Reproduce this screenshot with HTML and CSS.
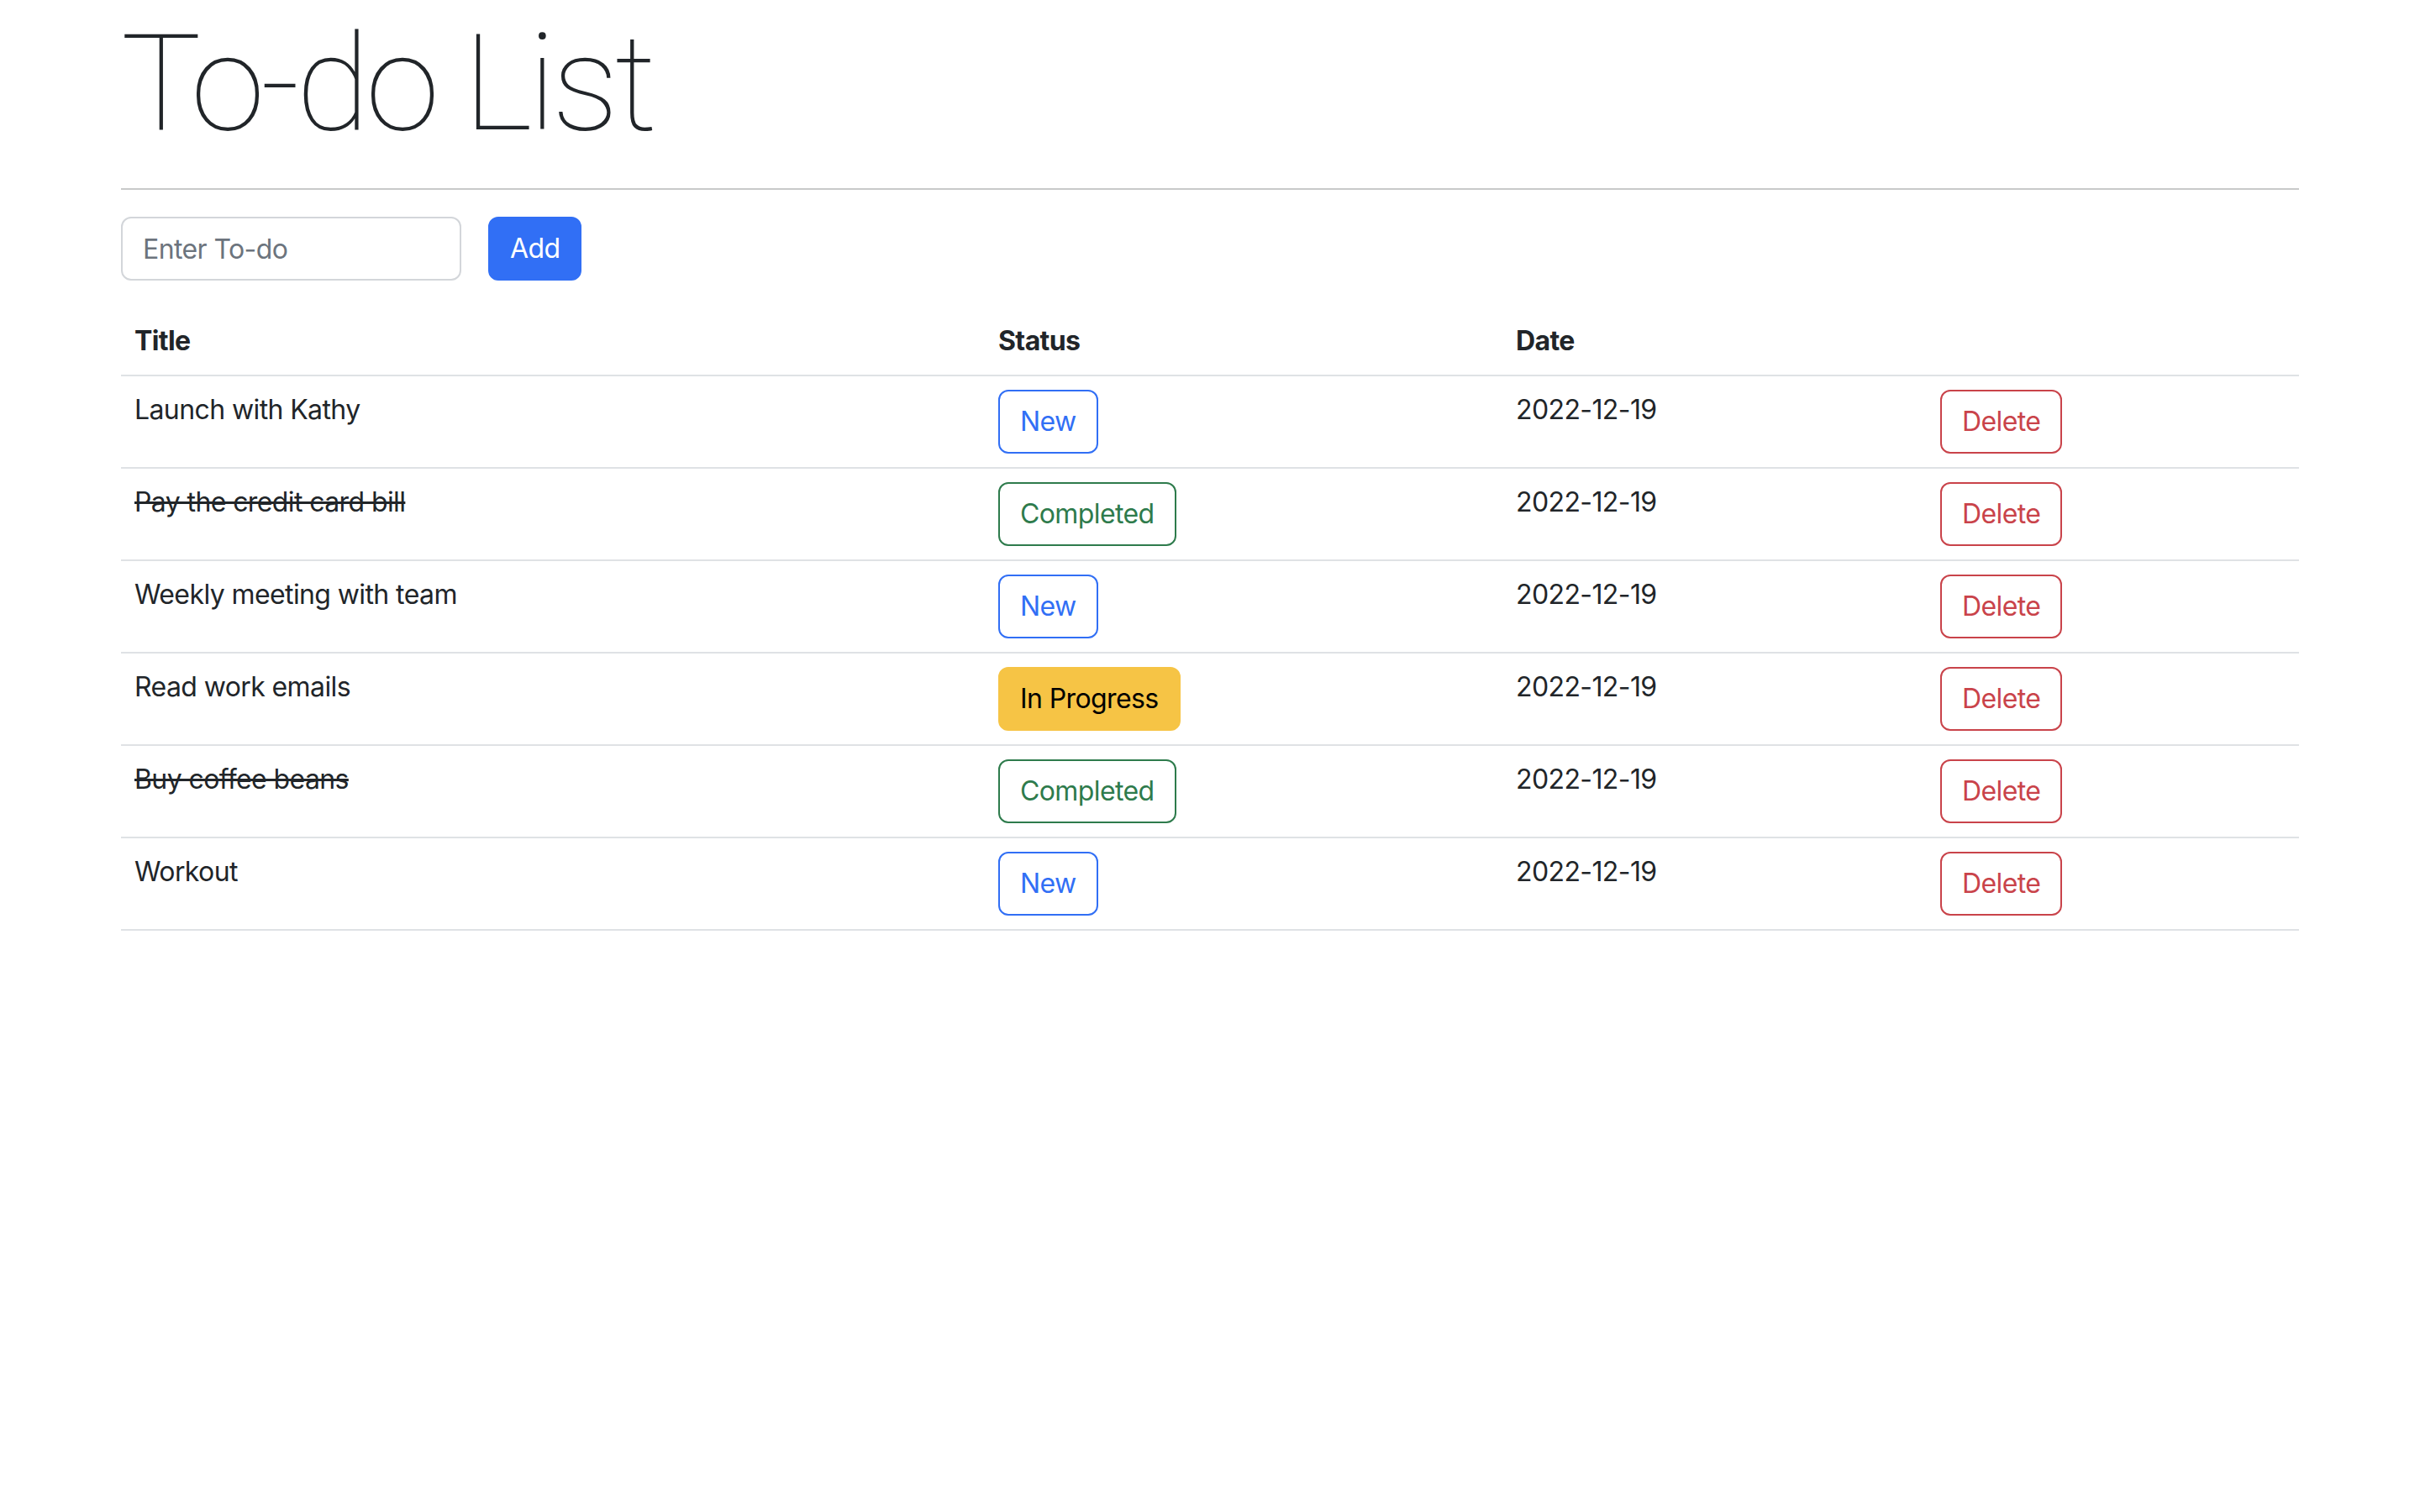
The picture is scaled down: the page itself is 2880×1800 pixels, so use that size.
FILE: index.html
```html
<!DOCTYPE html>
<html lang="en">
<head>
<meta charset="utf-8">
<title>To-do List</title>
<link rel="stylesheet" href="styles.css">
</head>
<body>
<div class="container">
  <h1 class="display">To-do List</h1>
  <hr class="divider">
  <form class="add-form">
    <input class="form-control" type="text" placeholder="Enter To-do">
    <button type="button" class="btn btn-primary">Add</button>
  </form>
  <table class="table">
    <colgroup>
      <col class="col-title">
      <col class="col-status">
      <col class="col-date">
      <col class="col-action">
    </colgroup>
    <thead>
      <tr><th>Title</th><th>Status</th><th>Date</th><th></th></tr>
    </thead>
    <tbody>
      <tr>
        <td>Launch with Kathy</td>
        <td><button type="button" class="btn btn-outline-primary">New</button></td>
        <td>2022-12-19</td>
        <td><button type="button" class="btn btn-outline-danger">Delete</button></td>
      </tr>
      <tr>
        <td class="done">Pay the credit card bill</td>
        <td><button type="button" class="btn btn-outline-success">Completed</button></td>
        <td>2022-12-19</td>
        <td><button type="button" class="btn btn-outline-danger">Delete</button></td>
      </tr>
      <tr>
        <td>Weekly meeting with team</td>
        <td><button type="button" class="btn btn-outline-primary">New</button></td>
        <td>2022-12-19</td>
        <td><button type="button" class="btn btn-outline-danger">Delete</button></td>
      </tr>
      <tr>
        <td>Read work emails</td>
        <td><button type="button" class="btn btn-warning">In Progress</button></td>
        <td>2022-12-19</td>
        <td><button type="button" class="btn btn-outline-danger">Delete</button></td>
      </tr>
      <tr>
        <td class="done">Buy coffee beans</td>
        <td><button type="button" class="btn btn-outline-success">Completed</button></td>
        <td>2022-12-19</td>
        <td><button type="button" class="btn btn-outline-danger">Delete</button></td>
      </tr>
      <tr>
        <td>Workout</td>
        <td><button type="button" class="btn btn-outline-primary">New</button></td>
        <td>2022-12-19</td>
        <td><button type="button" class="btn btn-outline-danger">Delete</button></td>
      </tr>
    </tbody>
  </table>
</div>
</body>
</html>
```

FILE: styles.css
```css
* { box-sizing: border-box; }

html, body {
  margin: 0;
  padding: 0;
  background: #ffffff;
}

body {
  font-family: Inter, "Liberation Sans", Arial, sans-serif;
  font-size: 32px;
  line-height: 1.5;
  letter-spacing: -0.6px;
  color: #212529;
}

.container {
  width: 2592px;
  margin: 0 auto;
}

.display {
  margin: 0 0 16px 0;
  padding-top: 8px;
  font-family: "Roboto Thin", Roboto, sans-serif;
  font-size: 160px;
  font-weight: 200;
  line-height: 184px;
  letter-spacing: -5px;
  color: #212529;
}

.divider {
  margin: 32px 0;
  border: 0;
  border-top: 2px solid #c8c9ca;
  height: 0;
}

.add-form {
  display: flex;
  gap: 32px;
  margin: 0 0 32px 0;
}

.form-control {
  width: 405px;
  height: 76px;
  padding: 12px 24px;
  font-family: inherit;
  font-size: 32px;
  line-height: 1.5;
  letter-spacing: -0.6px;
  color: #212529;
  background: #fff;
  border: 2px solid #d3d6da;
  border-radius: 12px;
  outline: none;
}

.form-control::placeholder {
  color: #6c747d;
  opacity: 1;
}

.btn {
  display: inline-block;
  height: 76px;
  padding: 12px 24px;
  font-family: inherit;
  font-size: 32px;
  font-weight: 400;
  line-height: 1.5;
  letter-spacing: -0.6px;
  border: 2px solid transparent;
  border-radius: 12px;
  background: transparent;
  cursor: pointer;
  white-space: nowrap;
}

.btn-primary {
  background: #316ff5;
  border-color: #316ff5;
  color: #ffffff;
}

.btn-outline-primary {
  color: #316ff5;
  border-color: #316ff5;
}

.btn-outline-success {
  color: #2e7b4c;
  border-color: #2e7b4c;
}

.btn-outline-danger {
  color: #c9434a;
  border-color: #c9434a;
}

.btn-warning {
  background: #f6c445;
  border-color: #f6c445;
  color: #000000;
}

.table {
  width: 100%;
  border-collapse: collapse;
  table-layout: fixed;
}

.col-title { width: 1028px; }
.col-status { width: 616px; }
.col-date { width: 505px; }
.col-action { width: 443px; }

.table th,
.table td {
  padding: 16px;
  text-align: left;
  vertical-align: top;
  border-bottom: 2px solid #dfe2e5;
}

.table th {
  font-weight: 700;
}

.done {
  text-decoration: line-through;
}
```
